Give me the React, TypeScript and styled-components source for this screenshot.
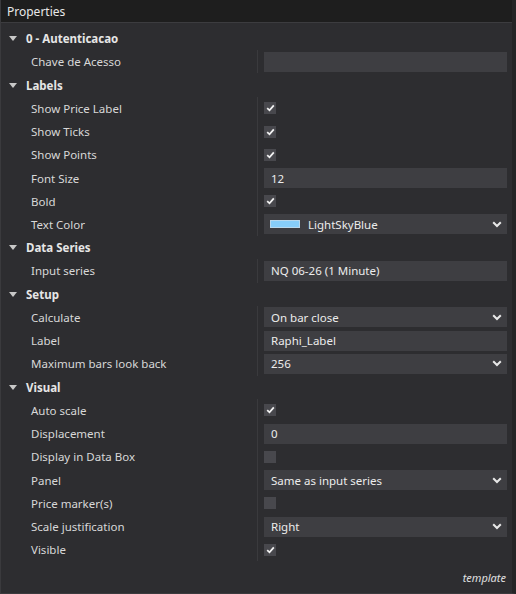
import { createGlobalStyle } from "styled-components";
import styled from "styled-components";

const GlobalStyle = createGlobalStyle`
    html, body {
        margin: 0;
        padding: 0;
        background: #2d2d30;
    }
    body {
        font-family: "Noto Sans", "Open Sans", sans-serif;
        font-size: 11.5px;
        color: #f1f1f1;
    }
`;

const ROW_H = 23.24;

const Window = styled.div`
    width: 516px;
    height: 594px;
    box-sizing: border-box;
    display: flex;
    flex-direction: column;
    background: #2d2d30;
    border-left: 1px solid #3a3a3d;
    border-right: 4px solid #252526;
    border-bottom: 1px solid #3a3a3d;
    overflow: hidden;
`;

const Header = styled.div`
    height: 22px;
    flex: none;
    display: flex;
    align-items: center;
    padding-left: 6px;
    background: #1e1e1e;
    border-bottom: 1px solid #3c3c3f;
    color: #e8e8e8;
    font-size: 12px;
`;

const Body = styled.div`
    flex: 1;
    padding-top: 4px;
    display: flex;
    flex-direction: column;
`;

const Group = styled.div`
    display: flex;
    flex-direction: column;
`;

const CategoryRow = styled.div`
    height: ${ROW_H}px;
    display: flex;
    align-items: center;
    gap: 9px;
    padding-left: 8px;
    font-weight: 700;
    color: #e6e6e6;
`;

const Triangle = styled.span`
    width: 0;
    height: 0;
    border-left: 4px solid transparent;
    border-right: 4px solid transparent;
    border-top: 5px solid #c8c8c8;
`;

const PropRow = styled.div`
    height: ${ROW_H}px;
    display: grid;
    grid-template-columns: 256px 1px 1fr;
    align-items: center;
`;

const Label = styled.span`
    padding-left: 30px;
    color: #d8d8d8;
`;

const Divider = styled.span`
    align-self: stretch;
    background: #3a3a3d;
`;

const Cell = styled.div`
    padding: 0 5px 0 6px;
    display: flex;
    align-items: center;
`;

const Field = styled.div<{ $dropdown?: boolean }>`
    flex: 1;
    height: 20px;
    box-sizing: border-box;
    display: flex;
    align-items: center;
    gap: 8px;
    padding: 0 5px 0 7px;
    background: #3e3e42;
    color: #ececec;
    justify-content: ${(p) => (p.$dropdown ? "space-between" : "flex-start")};
`;

const FieldText = styled.span`
    flex: 1;
    white-space: nowrap;
`;

const Swatch = styled.span<{ $color: string }>`
    width: 30px;
    height: 8px;
    flex: none;
    background: ${(p) => p.$color};
    border: 1px solid #b9d9ee;
    box-sizing: border-box;
    margin-left: -1px;
`;

const Check = styled.span`
    width: 12px;
    height: 12px;
    background: #48484d;
    display: flex;
    align-items: center;
    justify-content: center;
`;

const Footer = styled.div`
    height: 26px;
    display: flex;
    align-items: center;
    justify-content: flex-end;
    padding-right: 6px;
    margin-top: auto;
    margin-bottom: 3px;
    font-style: italic;
    font-size: 11px;
    color: #e0e0e0;
`;

function Chevron() {
    return (
        <svg width="10" height="7" viewBox="0 0 10 7">
            <polyline
                points="1.2,1.2 5,5 8.8,1.2"
                fill="none"
                stroke="#e8e8e8"
                strokeWidth="2"
            />
        </svg>
    );
}

function CheckBox({ checked }: { checked: boolean }) {
    return (
        <Check>
            {checked && (
                <svg width="9" height="8" viewBox="0 0 9 8">
                    <path
                        d="M1.2 4.2 L3.5 6.3 L7.8 1.4"
                        fill="none"
                        stroke="#f2f2f2"
                        strokeWidth="1.8"
                    />
                </svg>
            )}
        </Check>
    );
}

type Value =
    | { kind: "text"; text: string }
    | { kind: "select"; text: string; color?: string }
    | { kind: "check"; checked: boolean };

interface IProp {
    label: string;
    value: Value;
}

interface ICategory {
    title: string;
    props: IProp[];
}

const categories: ICategory[] = [
    {
        title: "0 - Autenticacao",
        props: [{ label: "Chave de Acesso", value: { kind: "text", text: "" } }],
    },
    {
        title: "Labels",
        props: [
            { label: "Show Price Label", value: { kind: "check", checked: true } },
            { label: "Show Ticks", value: { kind: "check", checked: true } },
            { label: "Show Points", value: { kind: "check", checked: true } },
            { label: "Font Size", value: { kind: "text", text: "12" } },
            { label: "Bold", value: { kind: "check", checked: true } },
            {
                label: "Text Color",
                value: { kind: "select", text: "LightSkyBlue", color: "#87cefa" },
            },
        ],
    },
    {
        title: "Data Series",
        props: [
            {
                label: "Input series",
                value: { kind: "text", text: "NQ 06-26 (1 Minute)" },
            },
        ],
    },
    {
        title: "Setup",
        props: [
            { label: "Calculate", value: { kind: "select", text: "On bar close" } },
            { label: "Label", value: { kind: "text", text: "Raphi_Label" } },
            {
                label: "Maximum bars look back",
                value: { kind: "select", text: "256" },
            },
        ],
    },
    {
        title: "Visual",
        props: [
            { label: "Auto scale", value: { kind: "check", checked: true } },
            { label: "Displacement", value: { kind: "text", text: "0" } },
            {
                label: "Display in Data Box",
                value: { kind: "check", checked: false },
            },
            {
                label: "Panel",
                value: { kind: "select", text: "Same as input series" },
            },
            { label: "Price marker(s)", value: { kind: "check", checked: false } },
            {
                label: "Scale justification",
                value: { kind: "select", text: "Right" },
            },
            { label: "Visible", value: { kind: "check", checked: true } },
        ],
    },
];

function ValueCell({ value }: { value: Value }) {
    if (value.kind === "check") {
        return (
            <Cell>
                <CheckBox checked={value.checked} />
            </Cell>
        );
    }
    if (value.kind === "select") {
        return (
            <Cell>
                <Field $dropdown>
                    {value.color && <Swatch $color={value.color} />}
                    <FieldText>{value.text}</FieldText>
                    <Chevron />
                </Field>
            </Cell>
        );
    }
    return (
        <Cell>
            <Field>
                <FieldText>{value.text}</FieldText>
            </Field>
        </Cell>
    );
}

export default function App() {
    return (
        <>
            <GlobalStyle />
            <Window>
                <Header>Properties</Header>
                <Body>
                    {categories.map((category) => (
                        <Group key={category.title}>
                            <CategoryRow>
                                <Triangle />
                                {category.title}
                            </CategoryRow>
                            {category.props.map((prop) => (
                                <PropRow key={prop.label}>
                                    <Label>{prop.label}</Label>
                                    <Divider />
                                    <ValueCell value={prop.value} />
                                </PropRow>
                            ))}
                        </Group>
                    ))}
                    <Footer>template</Footer>
                </Body>
            </Window>
        </>
    );
}
